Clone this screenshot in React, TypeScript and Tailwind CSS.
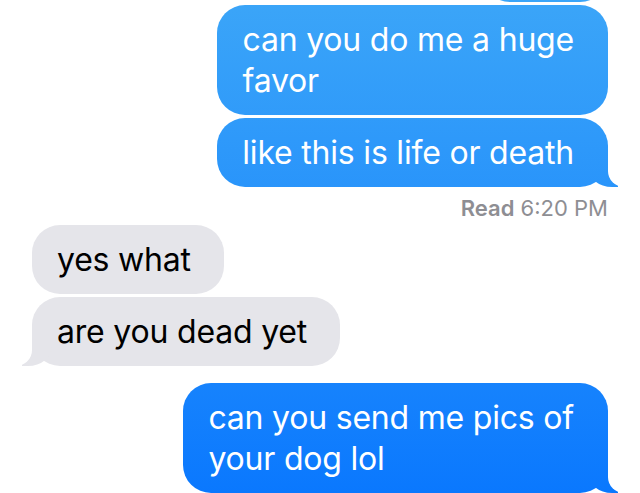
const font = { fontFamily: "Inter, 'Liberation Sans', sans-serif" };

function SentTail() {
  return (
    <>
      <span className="absolute bottom-0 right-[-10px] h-[30px] w-[30px] rounded-bl-[24px_20px] bg-linear-to-b from-[#3ba5f8] to-[#0a78fe] bg-fixed" />
      <span className="absolute bottom-0 right-[-40px] h-[30px] w-[40px] rounded-bl-[16px] bg-white" />
    </>
  );
}

function ReceivedTail() {
  return (
    <>
      <span className="absolute bottom-0 left-[-10px] h-[30px] w-[30px] rounded-br-[24px_20px] bg-[#e5e5ea]" />
      <span className="absolute bottom-0 left-[-40px] h-[30px] w-[40px] rounded-br-[16px] bg-white" />
    </>
  );
}

function Lines({ lines }: { lines: string[] }) {
  return (
    <div className="relative z-10 whitespace-nowrap">
      {lines.map((l) => (
        <div key={l}>{l}</div>
      ))}
    </div>
  );
}

function Sent({ lines, tail, className = "" }: { lines: string[]; tail?: boolean; className?: string }) {
  return (
    <div
      className={`relative self-end rounded-[28px] bg-linear-to-b from-[#3ba5f8] to-[#0a78fe] bg-fixed py-[14px] pl-[25px] pr-[34px] text-[32px] leading-[41px] tracking-[-0.2px] text-white ${className}`}
    >
      <Lines lines={lines} />
      {tail && <SentTail />}
    </div>
  );
}

function Received({ lines, tail, className = "" }: { lines: string[]; tail?: boolean; className?: string }) {
  return (
    <div
      className={`relative self-start rounded-[28px] bg-[#e5e5ea] py-[14px] pl-[25px] pr-[33px] text-[32px] leading-[41px] tracking-[-0.2px] text-black ${className}`}
    >
      <Lines lines={lines} />
      {tail && <ReceivedTail />}
    </div>
  );
}

export default function App() {
  return (
    <div className="h-[493px] w-[640px] overflow-hidden bg-white" style={font}>
      <div className="flex flex-col px-[32px]">
        {/* bottom edge of an earlier message */}
        <div className="mt-[-58px] h-[60px] w-[126px] self-end rounded-[28px] bg-linear-to-b from-[#3ba5f8] to-[#0a78fe] bg-fixed" />

        <Sent className="mt-[3px]" lines={["can you do me a huge", "favor"]} />
        <Sent className="mt-[3px]" lines={["like this is life or death"]} tail />

        <div className="mt-[9px] mb-[5px] self-end text-[22px] leading-[24px] text-[#8e8e93]">
          <span className="font-semibold">Read</span> 6:20 PM
        </div>

        <Received lines={["yes what"]} />
        <Received className="mt-[3px]" lines={["are you dead yet"]} tail />

        <Sent className="mt-[17px]" lines={["can you send me pics of", "your dog lol"]} tail />
      </div>
    </div>
  );
}
